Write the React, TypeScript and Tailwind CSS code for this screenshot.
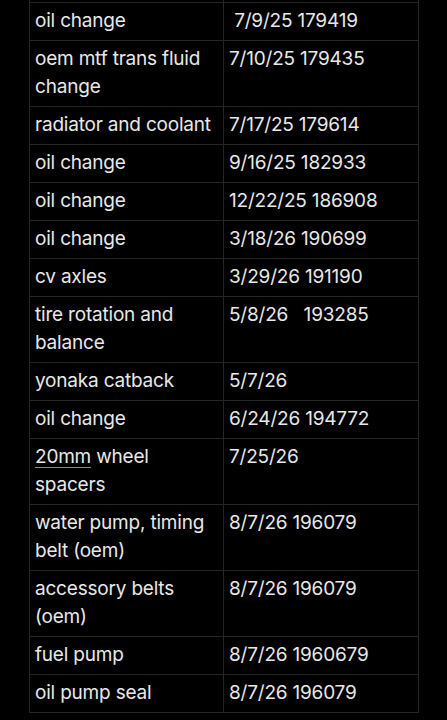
const rows: [string, string][] = [
  ['oil change', ' 7/9/25 179419'],
  ['oem mtf trans fluid change', '7/10/25 179435'],
  ['radiator and coolant', '7/17/25 179614'],
  ['oil change', '9/16/25 182933'],
  ['oil change', '12/22/25 186908'],
  ['oil change', '3/18/26 190699'],
  ['cv axles', '3/29/26 191190'],
  ['tire rotation and balance', '5/8/26   193285'],
  ['yonaka catback', '5/7/26'],
  ['oil change', '6/24/26 194772'],
  ['20mm wheel spacers', '7/25/26'],
  ['water pump, timing belt (oem)', '8/7/26 196079'],
  ['accessory belts (oem)', '8/7/26 196079'],
  ['fuel pump', '8/7/26 1960679'],
  ['oil pump seal', '8/7/26 196079'],
];

function Label({ text }: { text: string }) {
  if (text.startsWith('20mm')) {
    return (
      <>
        <span className="underline decoration-1 underline-offset-4 decoration-[#8a8a8a]">20mm</span>
        {text.slice(4)}
      </>
    );
  }
  return <>{text}</>;
}

export default function App() {
  return (
    <div className="min-h-[720px] w-[447px] bg-black font-['Inter','Noto_Sans',sans-serif] text-[19px] leading-[28px] text-[#e8e8e8]">
      <div className="ml-[29px] w-[390px] border-x border-[#262626]">
        <div className="grid h-[2px] grid-cols-[194px_195px]">
          <div className="border-r border-[#262626]" />
          <div />
        </div>
        {rows.map(([a, b], i) => (
          <div key={i} className="grid grid-cols-[194px_195px] border-t border-[#262626]">
            <div className="border-r border-[#262626] px-[5px] pt-[4px] pb-[5px] tracking-[-0.2px]">
              <Label text={a} />
            </div>
            <div className="whitespace-pre px-[5px] pt-[4px] pb-[5px] tracking-[-0.2px]">{b}</div>
          </div>
        ))}
        <div className="border-t border-[#262626]" />
      </div>
    </div>
  );
}
